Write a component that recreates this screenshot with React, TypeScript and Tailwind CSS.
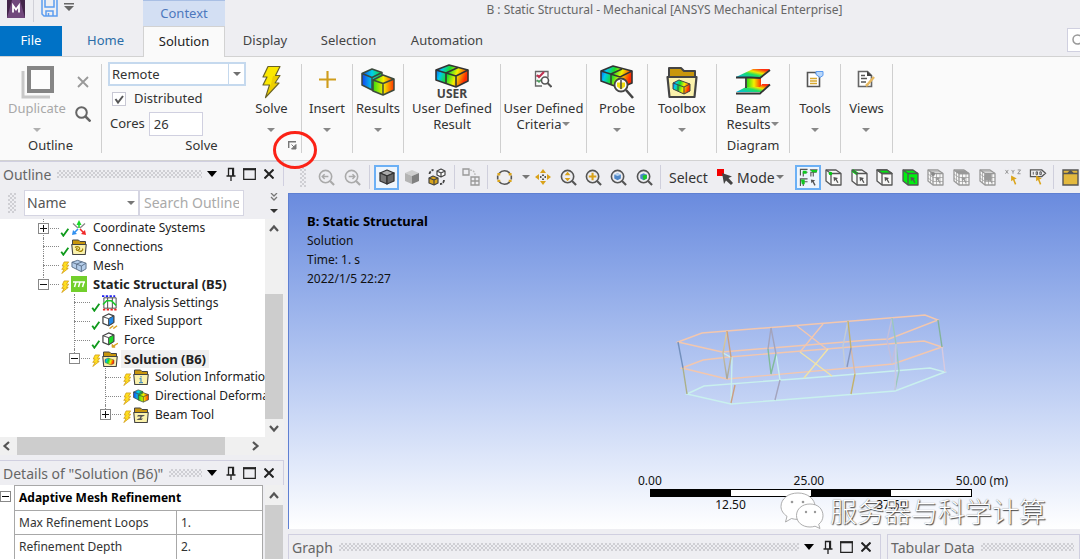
import React, { useState } from 'react';
import clsx from 'clsx';

type Status = 'ok' | 'pending';

interface TreeItem {
  label: string;
  depth: number;
  status: Status;
  icon: React.ReactNode;
  toggle?: '+' | '-';
  bold?: boolean;
  last?: boolean;
}

/* ---------- small shared glyphs ---------- */

const Caret: React.FC<{ className?: string }> = ({ className }) => (
  <svg viewBox="0 0 8 4" className={clsx('h-1 w-2 shrink-0', className)} fill="currentColor">
    <path d="M0 0h8L4 4z" />
  </svg>
);

const Chevron: React.FC<{ className?: string }> = ({ className }) => (
  <svg viewBox="0 0 10 10" className={clsx('h-[10px] w-[10px] shrink-0', className)} fill="none" stroke="#555" strokeWidth="2.2">
    <path d="M1 7l4-4.5L9 7" />
  </svg>
);

const Dots: React.FC<{ className?: string }> = ({ className }) => (
  <div
    className={clsx(
      'bg-[linear-gradient(#c2c2c8,#c2c2c8),linear-gradient(#c2c2c8,#c2c2c8)] bg-[length:4px_4px] bg-[position:0_0,2px_2px]',
      '[mask-image:conic-gradient(#000_25%,transparent_0_50%,#000_0_75%,transparent_0)] [mask-size:4px_4px] opacity-70',
      className
    )}
  />
);

const Bolt: React.FC<{ className?: string }> = ({ className }) => (
  <svg viewBox="0 0 22 34" className={className}>
    <path d="M8 1.500h12l-4.500 9h4.500l-5 7.500h4L5.500 32.500l4-12.500H3l4-8H3z" fill="#fbe800" stroke="#6a6226" strokeWidth="1.200" strokeLinejoin="round" />
    <path d="M13 11h6l-5 7.500h4L7 30l4-11z" fill="#d9a800" opacity=".4" />
  </svg>
);

const ContourDefs = () => (
  <svg className="absolute h-0 w-0" aria-hidden="true">
    <defs>
      <linearGradient id="hot" x1="0" x2="1" y1="0" y2="0.25">
        <stop offset="0" stopColor="#1238e8" />
        <stop offset=".22" stopColor="#00c8f0" />
        <stop offset=".45" stopColor="#18dc28" />
        <stop offset=".7" stopColor="#f2f000" />
        <stop offset="1" stopColor="#ff2a00" />
      </linearGradient>
      <linearGradient id="cool" x1="0" x2="1">
        <stop offset="0" stopColor="#1440f0" />
        <stop offset=".5" stopColor="#00d0e8" />
        <stop offset="1" stopColor="#20d820" />
      </linearGradient>
      <linearGradient id="warm" x1="0" x2="1">
        <stop offset="0" stopColor="#30dc10" />
        <stop offset=".5" stopColor="#f4f000" />
        <stop offset="1" stopColor="#ff3000" />
      </linearGradient>
      <linearGradient id="beamTop" x1="0" x2="1" y1="1" y2="0">
        <stop offset="0" stopColor="#00b8f0" />
        <stop offset=".4" stopColor="#20e060" />
        <stop offset=".6" stopColor="#f0e800" />
        <stop offset=".85" stopColor="#ff3010" />
      </linearGradient>
      <linearGradient id="canvasLine" x1="0" x2="0" y1="0" y2="1">
        <stop offset="0" stopColor="#e6cf9a" />
        <stop offset="1" stopColor="#a6a79c" />
      </linearGradient>
    </defs>
  </svg>
);

const Blocks: React.FC<{ className?: string }> = ({ className }) => (
  <svg viewBox="0 0 34 28" className={className} stroke="#3c4a3c" strokeWidth="1.5" strokeLinejoin="round">
    <path d="M1 5.500L11 1l10 3.500V18l-9 4.500L1 17z" fill="url(#cool)" />
    <path d="M1 5.500l10 4 10-5M11 9.500v12.500" fill="none" />
    <path d="M12 12l10-5 11 4v11l-11 5-10-4z" fill="url(#warm)" />
    <path d="M12 12l10 3.500 11-4.500M22 15.500v11.500" fill="none" />
  </svg>
);

const LongBox: React.FC<{ className?: string }> = ({ className }) => (
  <svg viewBox="0 0 34 24" className={className} stroke="#333" strokeWidth="1.6" strokeLinejoin="round">
    <path d="M1 6l13-5 19 5v11l-12 6L1 16z" fill="url(#hot)" />
    <path d="M1 6l20 6 12-6M21 12v11M11 9v10M11 9l12-5.500" fill="none" />
  </svg>
);

const Folder: React.FC<{ className?: string; children?: React.ReactNode }> = ({ className, children }) => (
  <svg viewBox="0 0 32 32" className={className} strokeLinejoin="round">
    <path d="M3 12V2h12l3 3h11v7z" fill="#c8960c" stroke="#444" strokeWidth="2" />
    <path d="M1.500 11h29l-2 20h-25z" fill="#fbf2ac" stroke="#444" strokeWidth="2.200" />
    {children}
  </svg>
);

/* ---------- ribbon icons ---------- */

const DuplicateIcon = () => (
  <svg viewBox="0 0 34 34" className="h-[34px] w-[34px]" fill="none">
    <path d="M3 6v26h27" stroke="#c8c8c8" strokeWidth="3" />
    <rect x="9" y="3" width="23" height="23" fill="#fdfdfd" stroke="#858585" strokeWidth="4" />
  </svg>
);

const CriteriaIcon = () => (
  <svg viewBox="0 0 18 18" className="h-[18px] w-[18px]" fill="none" stroke="#666">
    <path d="M1 1.500h13v6M1.500 1v15H8" strokeWidth="1.300" />
    <path d="M1 6h6M1 11h5" />
    <path d="M3 5l2 2 5-5" stroke="#c03050" strokeWidth="2" />
    <path d="M3 10l2 2 3-3" stroke="#4aa05a" strokeWidth="1.500" />
    <circle cx="11" cy="10.500" r="3.500" fill="#fff" stroke="#555" strokeWidth="1.600" />
    <path d="M13.500 13l4 4" stroke="#555" strokeWidth="2" />
  </svg>
);

const ProbeIcon = () => (
  <svg viewBox="0 0 34 34" className="h-[34px] w-[34px]">
    <path d="M1 6l12-5 19 5v12l-12 5-19-7z" fill="url(#hot)" stroke="#333" strokeWidth="1.600" strokeLinejoin="round" />
    <path d="M1 6l19 6 12-6M11 9v10M11 9l11-5" fill="none" stroke="#333" strokeWidth="1.400" />
    <circle cx="21" cy="20" r="6.500" fill="#fafafa" stroke="#444" strokeWidth="1.800" />
    <path d="M17 17.500h8v4l-4 3-4-3z" fill="#f0dc10" />
    <path d="M21 15v9" stroke="#444" strokeWidth="1.500" />
    <path d="M26 25l7 8" stroke="#444" strokeWidth="2.500" />
  </svg>
);

const BeamIcon = () => (
  <svg viewBox="0 0 36 28" className="h-7 w-9">
    <path d="M12 10h14v12H12z" fill="url(#warm)" />
    <path d="M1 9L18 1h17l-9 8z" fill="url(#beamTop)" />
    <path d="M1 24l10-5h14l2-3h8l-9 8z" fill="url(#beamTop)" />
    <path d="M1 9.500h14l10 .5L35 2M1 25.500h24l10-9M11 10v10" fill="none" stroke="#333" strokeWidth="1.800" />
  </svg>
);

const ToolsIcon = () => (
  <svg viewBox="0 0 18 18" className="h-[18px] w-[18px]" fill="none">
    <path d="M1.500 2.500h8l4 4v10h-12z" fill="#fff" stroke="#555" strokeWidth="1.600" />
    <path d="M4 8.500h7M4 11h7M4 13.500h7" stroke="#d7a830" strokeWidth="1.300" />
    <path d="M10 1.500h7v4l-3 2-4-3z" fill="#b9d7fa" stroke="#5a9af0" />
  </svg>
);

const ViewsIcon = () => (
  <svg viewBox="0 0 18 18" className="h-[18px] w-[18px]" fill="none">
    <path d="M1.500 1.500h9l4 4v11h-13z" fill="#fff" stroke="#666" strokeWidth="1.600" />
    <path d="M10 1v5h5z" fill="#444" />
    <path d="M4 5.500h4M4 8.500h6M4 12h5" stroke="#555" strokeWidth="1.300" />
    <path d="M17 7l-6 7-2 2" stroke="#e6b860" strokeWidth="2.500" />
  </svg>
);

/* ---------- ribbon ---------- */

const RibbonButton: React.FC<{ icon: React.ReactNode; lines: string[]; disabled?: boolean; inlineCaret?: boolean; caret?: boolean }> = ({
  icon,
  lines,
  disabled,
  inlineCaret,
  caret = true,
}) => (
  <button disabled={disabled} className={clsx('flex flex-col items-center whitespace-nowrap leading-4', disabled ? 'text-[#a8a8a8]' : 'text-[#333]')}>
    <span className="flex h-9 items-center justify-center">{icon}</span>
    <span>{lines[0]}</span>
    {lines[1] && (
      <span className="flex items-center gap-px">
        {lines[1]}
        {inlineCaret && <Caret className="text-[#888]" />}
      </span>
    )}
    {!lines[1] && caret && <Caret className={clsx('mt-3', disabled ? 'text-[#b0b0b0]' : 'text-[#888]')} />}
  </button>
);

const RibbonGroup: React.FC<{ width: string; caption?: string; children: React.ReactNode }> = ({ width, caption, children }) => (
  <div className={clsx('flex shrink-0 flex-col items-center justify-between border-r border-[#cfcfcf]', width)}>
    {children}
    {caption && <div className="leading-4">{caption}</div>}
  </div>
);

const Ribbon = () => (
  <div className="flex border-y border-[#d2d2d2] bg-[#fafafa] text-[13px] text-[#333]">
    <div className="my-[7px] flex h-[89px]">
      <RibbonGroup width="w-[102px]" caption="Outline">
        <div className="flex w-full pl-2">
          <RibbonButton icon={<DuplicateIcon />} lines={['Duplicate']} disabled />
          <div className="flex flex-1 flex-col items-center gap-[18px] pt-3">
            <button aria-label="Delete">
              <svg viewBox="0 0 12 12" className="h-3 w-3" stroke="#999" strokeWidth="1.800"><path d="M1 1l10 10M11 1L1 11" /></svg>
            </button>
            <button aria-label="Find">
              <svg viewBox="0 0 16 16" className="h-4 w-4" fill="none" stroke="#666" strokeWidth="2"><circle cx="6.500" cy="6.500" r="5.300" /><path d="M10.500 10.500l5 5" strokeWidth="2.500" /></svg>
            </button>
          </div>
        </div>
      </RibbonGroup>

      <RibbonGroup width="w-[200px]">
        <div className="flex w-full">
          <div className="-mt-0.5 flex flex-1 flex-col pl-1.5">
            <div className="relative h-6">
              <select aria-label="Solve target" className="h-6 w-full appearance-none border-2 border-[#c5d9ee] bg-white pl-0.5 text-[13px] leading-4">
                <option>Remote</option>
              </select>
              <span className="pointer-events-none absolute inset-y-0.5 right-0.5 flex w-4 items-center justify-center border-l border-[#c5d9ee] text-[#707070]"><Caret /></span>
            </div>
            <label className="mt-1 flex h-[18px] items-center gap-2 pl-1">
              <span className="relative flex h-3.5 w-3.5">
                <input type="checkbox" defaultChecked className="peer h-3.5 w-3.5 appearance-none border border-[#c8c8d4] bg-white" />
                <svg viewBox="0 0 14 14" className="pointer-events-none absolute inset-0 hidden peer-checked:block" fill="none" stroke="#555" strokeWidth="2"><path d="M3.500 7l2.500 3.500L11 4" /></svg>
              </span>
              Distributed
            </label>
            <label className="mt-1 flex items-center gap-1 pl-0.5">
              Cores
              <input type="text" defaultValue="26" className="h-6 w-[54px] border border-[#d0d0e0] bg-white pl-1" />
            </label>
          </div>
          <div className="flex w-[55px] justify-center pr-1">
            <RibbonButton icon={<Bolt className="h-[34px] w-[22px]" />} lines={['Solve']} />
          </div>
        </div>
        <div className="relative flex w-full items-center justify-center leading-4">
          Solve
          <button aria-label="Solve options" className="absolute right-0 top-0 p-1">
            <svg viewBox="0 0 9 9" className="h-[9px] w-[9px]" fill="none" stroke="#777"><path d="M.7 7V.7H8" strokeWidth="1.400" /><path d="M3.500 3.500L7 7M8 3.500V8H3.500z" fill="#777" /></svg>
          </button>
          <svg viewBox="0 0 44 38" className="pointer-events-none absolute -right-4 -top-1.5 z-10 h-[38px] w-11" fill="none" stroke="#fb2216" strokeWidth="3"><ellipse cx="22" cy="19" rx="20.500" ry="17.500" /></svg>
        </div>
      </RibbonGroup>

      <RibbonGroup width="w-[51px]">
        <RibbonButton icon={<svg viewBox="0 0 16 16" className="mb-1.5 h-[17px] w-[17px]" stroke="#cf9d1c" strokeWidth="2"><path d="M8 0v16M0 8h16" /></svg>} lines={['Insert']} />
      </RibbonGroup>
      <RibbonGroup width="w-[51px]">
        <RibbonButton icon={<Blocks className="h-7 w-[34px]" />} lines={['Results']} />
      </RibbonGroup>
      <RibbonGroup width="w-[97px]">
        <RibbonButton
          icon={
            <span className="flex flex-col items-center">
              <LongBox className="h-6 w-[34px]" />
              <span className="text-[12px] font-bold leading-3 text-[#444]">USER</span>
            </span>
          }
          lines={['User Defined', 'Result']}
        />
      </RibbonGroup>
      <RibbonGroup width="w-[86px]">
        <RibbonButton icon={<span className="pb-1.5"><CriteriaIcon /></span>} lines={['User Defined', 'Criteria']} inlineCaret />
      </RibbonGroup>
      <RibbonGroup width="w-[61px]">
        <RibbonButton icon={<ProbeIcon />} lines={['Probe']} />
      </RibbonGroup>
      <RibbonGroup width="w-[69px]">
        <RibbonButton
          icon={
            <Folder className="h-8 w-8">
              <path d="M7 17l6-3 11 4v7l-6 3-11-5z" fill="url(#hot)" stroke="#444" />
              <path d="M7 17l11 4 6-3M18 21v7M12 19v6" fill="none" stroke="#444" />
            </Folder>
          }
          lines={['Toolbox']}
        />
      </RibbonGroup>
      <RibbonGroup width="w-[73px]" caption="Diagram">
        <RibbonButton icon={<BeamIcon />} lines={['Beam', 'Results']} inlineCaret />
      </RibbonGroup>
      <RibbonGroup width="w-[51px]">
        <RibbonButton icon={<span className="pb-1.5"><ToolsIcon /></span>} lines={['Tools']} />
      </RibbonGroup>
      <RibbonGroup width="w-[52px]">
        <RibbonButton icon={<span className="pb-1.5"><ViewsIcon /></span>} lines={['Views']} />
      </RibbonGroup>
    </div>
  </div>
);

/* ---------- docked panel chrome ---------- */

const PanelHeader: React.FC<{ title: string; controls?: boolean }> = ({ title, controls = true }) => (
  <div className="flex h-[25px] shrink-0 items-center border-r border-t border-[#d0cfe0] bg-[#eeeef2] pl-[3px] pr-[5px]">
    <h2 className="mr-1.5 whitespace-nowrap text-[14px] text-[#666]">{title}</h2>
    <Dots className="h-2 flex-1" />
    {controls && (
      <div className="flex text-[#222]">
        <button aria-label="Menu" className="flex w-[19px] items-center justify-center">
          <svg viewBox="0 0 10 6" className="h-1.5 w-[10px]"><path d="M0 0h10L5 6z" /></svg>
        </button>
        <button aria-label="Pin" className="flex w-[19px] items-center justify-center">
          <svg viewBox="0 0 10 14" className="h-3.5 w-[10px]" fill="none" stroke="currentColor"><path d="M2.500 9V1.500h5V9M.5 9h9M5 9v5" strokeWidth="1.300" /><path d="M7 1v8" strokeWidth="2" /></svg>
        </button>
        <button aria-label="Maximize" className="flex w-[19px] items-center justify-center">
          <svg viewBox="0 0 13 12" className="h-3 w-[13px]" fill="none" stroke="currentColor"><path d="M.7 1v10.300h11.600V1" strokeWidth="1.200" /><path d="M0 1.200h13" strokeWidth="2.200" /></svg>
        </button>
        <button aria-label="Close" className="flex w-[19px] items-center justify-center">
          <svg viewBox="0 0 10 10" className="h-[10px] w-[10px]" stroke="currentColor" strokeWidth="2"><path d="M.5.5l9 9M9.500.5l-9 9" /></svg>
        </button>
      </div>
    )}
  </div>
);

/* ---------- outline tree ---------- */

const StatusMark: React.FC<{ status: Status }> = ({ status }) =>
  status === 'ok' ? (
    <svg viewBox="0 0 12 12" className="mt-2 h-[10px] w-3 shrink-0" fill="none" stroke="#0f9a1c" strokeWidth="2.200"><path d="M1.500 7l2.500 3.500L10 2" /></svg>
  ) : (
    <svg viewBox="0 0 12 14" className="mt-1 h-[13px] w-3 shrink-0" strokeLinejoin="round"><path d="M5 1h5L7.500 4.500H10L7.500 8H9.500L2.500 13.500 5 9H2.500L5 5.500H3z" fill="#ffdf20" stroke="#d09a10" strokeWidth=".8" /></svg>
  );

const SmallCube: React.FC<{ face: string; arrow?: boolean }> = ({ face, arrow }) => (
  <svg viewBox="0 0 17 17" className="h-4 w-4" strokeLinejoin="round">
    <path d="M1 4l6-3 5.500 2v7L7 13.500 1 11z" fill="#fff" stroke="#444" strokeWidth="1.300" />
    <path d="M7 6l5.500-3v7L7 13.500z" fill={face} stroke="#444" />
    <path d="M1 4l6 2" stroke="#444" />
    {arrow ? <path d="M17 12l-6 3.500M11 13v3h3" fill="none" stroke="#d8a020" strokeWidth="1.500" /> : <path d="M8 16.500l4-3M12 16.500l4-3" stroke="#d8a020" strokeWidth="1.500" />}
  </svg>
);

const SmallFolder: React.FC<{ children: React.ReactNode }> = ({ children }) => <Folder className="h-4 w-4">{children}</Folder>;

const TREE: TreeItem[] = [
  {
    label: 'Coordinate Systems', depth: 0, status: 'ok', toggle: '+',
    icon: (
      <svg viewBox="0 0 16 16" className="h-4 w-4" fill="none" strokeWidth="1.600">
        <path d="M7 8L2 3.500M9 8l5-4.500" stroke="#888" strokeWidth="1.300" />
        <path d="M8 8V4" stroke="#18d828" /><path d="M5.500 5L8 0l2.500 5z" fill="#18d828" />
        <path d="M7 9l-4 4" stroke="#3090f0" /><path d="M1 15l1-5 4 4z" fill="#3090f0" />
        <path d="M9 9l4 4" stroke="#f02828" /><path d="M15 15l-1-5-4 4z" fill="#f02828" />
      </svg>
    ),
  },
  { label: 'Connections', depth: 0, status: 'ok', icon: <SmallFolder><path d="M8 17c5-4 12 0 8 4s-8 0-3-3M15 24c5 2 10-1 8-5" fill="none" stroke="#a08000" strokeWidth="2.500" /></SmallFolder> },
  {
    label: 'Mesh', depth: 0, status: 'pending',
    icon: (
      <svg viewBox="0 0 17 14" className="h-3.5 w-4" fill="#b4cdea" stroke="#5b6f88" strokeLinejoin="round"><path d="M1 3l6-2 9 3v6l-5 3-10-5z" /><path d="M1 3l10 4 5-3M11 7v6M6 5v5M6 5l6-2.500" fill="none" /></svg>
    ),
  },
  {
    label: 'Static Structural (B5)', depth: 0, status: 'pending', toggle: '-', bold: true, last: true,
    icon: <svg viewBox="0 0 16 16" className="h-4 w-4"><path d="M0 0h16v16H0z" fill="#72cf2c" /><path d="M2 6h12M5 6l-1.500 5M9 6l-1.500 5M13 6l-1.500 5" stroke="#fff" strokeWidth="1.500" /></svg>,
  },
  {
    label: 'Analysis Settings', depth: 1, status: 'ok',
    icon: (
      <svg viewBox="0 0 17 17" className="h-4 w-4" fill="none">
        <path d="M2 3v11M6 3v11M11 3v11M15 3v11M2 3h13M2 14h13" stroke="#444" />
        <path d="M0 1.200h14" stroke="#2020f0" strokeWidth="2" strokeDasharray="2.500 1.500" />
        <path d="M1 10l4-4h5l5 5" stroke="#18c828" strokeWidth="1.600" />
        <path d="M1 15.500h16" stroke="#f02020" strokeWidth="2" strokeDasharray="2.500 1.500" />
      </svg>
    ),
  },
  { label: 'Fixed Support', depth: 1, status: 'ok', icon: <SmallCube face="#2288e8" /> },
  { label: 'Force', depth: 1, status: 'ok', icon: <SmallCube face="#18dc28" arrow /> },
  {
    label: 'Solution (B6)', depth: 1, status: 'pending', toggle: '-', bold: true, last: true,
    icon: <SmallFolder><path d="M6 17l6-3 12 4v7l-6 3-12-5z" fill="url(#hot)" stroke="#555" /></SmallFolder>,
  },
  { label: 'Solution Information', depth: 2, status: 'pending', icon: <SmallFolder><path d="M16 14v3M13 19h3v8M12 27h8" stroke="#4a90c0" strokeWidth="2.500" fill="none" /></SmallFolder> },
  { label: 'Directional Deformation', depth: 2, status: 'pending', icon: <Blocks className="h-3.5 w-4" /> },
  { label: 'Beam Tool', depth: 2, status: 'pending', toggle: '+', last: true, icon: <SmallFolder><path d="M10 16h14l-4 3h-2l-2 4h4l-3 3H7l4-3h2l2-4h-7z" fill="#555" /></SmallFolder> },
];

const TreeRow: React.FC<{ item: TreeItem; selected: boolean; onSelect: () => void }> = ({ item, selected, onSelect }) => (
  <li className="flex min-h-0 items-center">
    {Array.from({ length: item.depth }, (_, i) => (
      <span key={i} className="w-[31px] shrink-0" />
    ))}
    <span className="relative flex w-[31px] shrink-0 items-center self-stretch">
      <span className={clsx('absolute left-[15px] top-0 border-l border-dotted border-[#888]', item.last ? 'h-1/2' : 'h-full')} />
      <span className="absolute left-[15px] right-0 border-t border-dotted border-[#888]" />
      {item.toggle && (
        <button aria-label="Toggle" className="relative ml-[10px] flex h-[11px] w-[11px] items-center justify-center border border-[#888] bg-white">
          <svg viewBox="0 0 7 7" className="h-[7px] w-[7px] shrink-0" stroke="#111"><path d={item.toggle === '+' ? 'M0 3.500h7M3.500 0v7' : 'M0 3.500h7'} /></svg>
        </button>
      )}
    </span>
    <StatusMark status={item.status} />
    <span className="flex w-4 shrink-0 items-center">{item.icon}</span>
    <button
      onClick={onSelect}
      className={clsx('ml-[3px] h-[18px] whitespace-nowrap px-[3px] leading-[18px] text-[#222]', item.bold && 'text-[13px] font-bold', selected && 'bg-[#f0f0f0]')}
    >
      {item.label}
    </button>
  </li>
);

const OutlinePanel = () => {
  const [selected, setSelected] = useState('Solution (B6)');

  return (
    <section>
      <PanelHeader title="Outline" />
      <div className="flex h-[33px] items-center pl-2 text-[14px] text-[#555]">
        <Dots className="mr-2 h-5 w-2" />
        <div className="relative h-[26px] w-[115px]">
          <select aria-label="Filter by" className="h-full w-full appearance-none border border-[#d5d5e2] bg-white pl-0.5">
            <option>Name</option>
          </select>
          <Caret className="pointer-events-none absolute right-1 top-[11px] text-[#777]" />
        </div>
        <input aria-label="Search Outline" placeholder="Search Outline" className="h-[26px] w-[105px] border border-[#d5d5e2] bg-white px-1 placeholder:text-[#aaa]" />
        <div className="flex flex-1 flex-col items-center gap-2 pl-5">
          <svg viewBox="0 0 8 8" className="h-2 w-2" fill="none" stroke="#777" strokeWidth="1.300"><path d="M1 0l3 3 3-3M1 4l3 3 3-3" /></svg>
          <Caret className="text-[#333]" />
        </div>
      </div>
      <div className="flex bg-[#f0f0f0] pr-px">
        <ul className="grid h-[218px] flex-1 auto-rows-fr overflow-hidden bg-white pb-[13px] pl-7 text-[12px]">
          {TREE.map((item) => (
            <TreeRow key={item.label} item={item} selected={selected === item.label} onSelect={() => setSelected(item.label)} />
          ))}
        </ul>
        <div className="flex w-[18px] flex-col items-center justify-between py-1">
          <Chevron className="mt-px" />
          <div className="mb-1 mt-[60px] w-full flex-1 bg-[#cdcdcd]" />
          <Chevron className="rotate-180" />
        </div>
      </div>
      <div className="flex h-[18px] items-center bg-[#f0f0f0] pl-0.5 pr-6">
        <Chevron className="-rotate-90" />
        <div className="ml-[5px] mr-[25px] h-full flex-1 bg-[#cdcdcd]" />
        <Chevron className="rotate-90" />
      </div>
    </section>
  );
};

const DetailsPanel = () => (
  <section className="mt-[5px] flex min-h-0 flex-1 flex-col">
    <PanelHeader title={'Details of "Solution (B6)"'} />
    <div className="flex min-h-0 flex-1 overflow-hidden pr-px">
      <div className="w-3.5 shrink-0 bg-white pt-1.5">
        <button aria-label="Collapse" className="flex h-[11px] w-[11px] items-center justify-center border border-[#888] bg-white">
          <span className="h-px w-[7px] bg-black" />
        </button>
      </div>
      <table className="h-[74px] flex-1 table-fixed border-collapse bg-white text-left text-[12px] text-[#333]">
        <tbody>
          <tr className="h-[25px]">
            <th colSpan={2} className="border border-[#a8a8a8] pl-1 text-black">Adaptive Mesh Refinement</th>
          </tr>
          <tr className="h-[24px]">
            <td className="w-[162px] border border-[#a8a8a8] pl-1">Max Refinement Loops</td>
            <td className="border border-[#a8a8a8] pl-1">1.</td>
          </tr>
          <tr className="h-[25px]">
            <td className="border border-[#a8a8a8] pl-1">Refinement Depth</td>
            <td className="border border-[#a8a8a8] pl-1">2.</td>
          </tr>
        </tbody>
      </table>
      <div className="ml-0.5 flex w-[18px] flex-col items-center bg-[#f0f0f0] pt-1.5">
        <Chevron />
        <div className="mt-1 w-full flex-1 bg-[#cdcdcd]" />
      </div>
    </div>
  </section>
);

/* ---------- graphics toolbar ---------- */

const Lens: React.FC<{ color?: string; children?: React.ReactNode }> = ({ color = '#555', children }) => (
  <svg viewBox="0 0 18 18" className="h-[17px] w-[17px]" fill="none">
    <circle cx="8" cy="8" r="6.500" stroke={color} strokeWidth="1.700" />
    <path d="M12.500 12.500l4.500 4.500" stroke={color} strokeWidth="2.200" />
    {children}
  </svg>
);

const Box3D: React.FC<{ dark?: boolean }> = ({ dark }) => (
  <svg viewBox="0 0 16 16" className="h-4 w-4" strokeLinejoin="round" stroke={dark ? '#333' : 'none'} strokeWidth="1.300">
    <path d="M1 4l7-3 7 3-7 3z" fill={dark ? '#aaa' : '#cfcfcf'} />
    <path d="M1 4l7 3v8l-7-3z" fill={dark ? '#777' : '#b4b4b4'} />
    <path d="M8 7l7-3v8l-7 3z" fill={dark ? '#666' : '#808080'} />
  </svg>
);

const PickCube: React.FC<{ mode: 'vertex' | 'edge' | 'face' | 'body' | 'node' | 'elemFace' | 'element' }> = ({ mode }) => {
  const muted = mode === 'node' || mode === 'elemFace' || mode === 'element';
  const stroke = muted ? '#999' : '#555';
  return (
    <svg viewBox="0 0 17 17" className="h-[17px] w-[17px]" fill="none" stroke={stroke} strokeWidth="1.300" strokeLinejoin="round">
      <path d="M1 1h10l5 3.500V16H6l-5-4z" fill={mode === 'body' ? '#00f010' : '#f8f8f8'} />
      {mode === 'face' && <path d="M1 1h10l5 3.500H6z" fill="#00e810" />}
      {mode === 'edge' && <path d="M1.500 1.500l5 3.500" stroke="#00d010" strokeWidth="3" />}
      <path d="M1 1l5 3.500h10M6 4.500V16" />
      {mode === 'vertex' && <circle cx="5.500" cy="4.500" r="1.800" fill="#00c810" stroke="none" />}
      {muted && <path d="M6 8.500h10M6 12.500h10M9.500 4.500V16M13 4.500V16M3.500 3v11M1 5l5 3.500M1 9l5 3.500M3.500 2.700h10" strokeWidth=".7" />}
      {mode === 'node' && <circle cx="6" cy="5" r="2" fill="#888" stroke="none" />}
      {mode === 'elemFace' && <path d="M3 2h9l3 2.500H6z" fill="#999" />}
      {mode === 'element' && <path d="M6 6l6-1v6H6z" fill="#999" />}
      <path d="M8.500 8l4.500 1-1.300 1.200 1.800 3.300-1.200.6-1.800-3.300L9 12.500z" fill={stroke} stroke="none" />
    </svg>
  );
};

const Sep = () => <span className="h-6 w-px shrink-0 bg-[#cfcfdc]" />;

const ToolButton: React.FC<{ label: string; active?: boolean; children: React.ReactNode }> = ({ label, active, children }) => (
  <button aria-label={label} className={clsx('flex h-[25px] min-w-0 items-center justify-center', active && 'border-2 border-[#6cb0f5] bg-[#eef5fc]')}>
    {children}
  </button>
);

const GraphicsToolbar = () => (
  <div className="flex h-8 shrink-0 items-center overflow-hidden pl-3 text-[14px] text-[#333]">
    <Dots className="h-5 w-1.5" />
    <div className="ml-2 mr-1 grid w-[51px] shrink-0 grid-cols-2">
      <ToolButton label="Zoom previous"><Lens color="#aaa"><path d="M4.500 8H11M7 5.500L4.500 8 7 10.500" stroke="#aaa" strokeWidth="1.500" /></Lens></ToolButton>
      <ToolButton label="Zoom next"><Lens color="#aaa"><path d="M5 8h6.500M9 5.500L11.500 8 9 10.500" stroke="#aaa" strokeWidth="1.500" /></Lens></ToolButton>
    </div>
    <Sep />
    <div className="ml-1 mr-1 grid w-[76px] shrink-0 grid-cols-3">
      <ToolButton label="Shaded with edges" active><Box3D dark /></ToolButton>
      <ToolButton label="Shaded"><Box3D /></ToolButton>
      <ToolButton label="Random colors">
        <svg viewBox="0 0 18 18" className="h-[18px] w-[18px]" strokeLinejoin="round" fill="none" stroke="#444" strokeWidth="1.200">
          <path d="M9 3l4-2 4 2v4l-4 2-4-2zM9 3l4 2 4-2M13 5v4" fill="#fff" />
          <path d="M1 10l4-2 5 2v5l-4 2-5-2z" fill="#d8a41c" /><path d="M1 10l5 2 4-2M6 12v5" />
          <path d="M1.500 6c0-2 2-4 4-4M16 12c0 2-1.500 4-4 4" strokeWidth="1.800" strokeDasharray="3 1" />
        </svg>
      </ToolButton>
    </div>
    <Sep />
    <div className="flex w-8 shrink-0 justify-center">
      <ToolButton label="Explode">
        <svg viewBox="0 0 18 18" className="h-[18px] w-[18px]" fill="none" stroke="#999" strokeWidth="1.300"><path d="M1 1h6v6H1zM9 9h8v8H9zM13 9v8M9 13h8" /><path d="M8 2c3 0 5 2 5 5" stroke="#bbb" strokeDasharray="2 1" /></svg>
      </ToolButton>
    </div>
    <Sep />
    <div className="ml-2 flex w-[34px] shrink-0 items-center justify-between">
      <ToolButton label="Rotate">
        <svg viewBox="0 0 18 18" className="h-[17px] w-[17px]" fill="none" stroke="#555" strokeWidth="1.700"><path d="M3.500 4.500a7 7 0 0 1 11 0M14.500 13.500a7 7 0 0 1-11 0M1.800 7v4M16.200 7v4" /><path d="M1.500 5.500h3M13.500 5.500h3M1.500 12.500h3M13.500 12.500h3" stroke="#dba51c" strokeWidth="2.500" /></svg>
      </ToolButton>
      <Caret className="text-[#777]" />
    </div>
    <div className="mr-[3px] grid w-[127px] shrink-0 grid-cols-5">
      <ToolButton label="Pan">
        <svg viewBox="0 0 16 16" className="h-4 w-4" fill="#d9a21a"><path d="M8 0l3 4H5zM8 16l3-4H5zM0 8l4-3v6zM16 8l-4-3v6z" /><path d="M7 5.500h2v1.500H7zM7 9.500h2V11H7zM5 7h1.500v2H5zM9.500 7H11v2H9.500z" fill="#555" /></svg>
      </ToolButton>
      <ToolButton label="Zoom"><Lens><path d="M8 3l3 3.500H5zM8 13l3-3.500H5z" fill="#d9a21a" /></Lens></ToolButton>
      <ToolButton label="Box zoom"><Lens><path d="M8 4v8M4 8h8" stroke="#d9a21a" strokeWidth="2.200" /></Lens></ToolButton>
      <ToolButton label="Zoom to fit"><Lens><path d="M4.500 6L8 4.500 11.500 6v4L8 12l-3.500-2z" fill="#4f87c8" /><path d="M4.500 6L8 7.500 11.500 6 8 4.500z" fill="#b8d4f0" /></Lens></ToolButton>
      <ToolButton label="Zoom to selection"><Lens><path d="M4.500 6L8 4.500 11.500 6v4L8 12l-3.500-2z" fill="#4f87c8" /><path d="M7 7l4.500-1v4L8 12z" fill="#18c828" /></Lens></ToolButton>
    </div>
    <Sep />
    <span className="ml-2 w-[48px] shrink-0">Select</span>
    <button className="flex w-[78px] shrink-0 items-center">
      <svg viewBox="0 0 16 16" className="mr-1 h-4 w-4 shrink-0"><path d="M0 0h7v7H0z" fill="#f40000" /><path d="M5 4l10 3.500-3.500 1.500L16 14l-2 2-5-4.500L7 15z" fill="#444" /></svg>
      Mode
      <Caret className="ml-px text-[#777]" />
    </button>
    <div className="grid w-[26px] shrink-0">
      <ToolButton label="Smart select" active>
        <svg viewBox="0 0 20 20" className="h-[19px] w-[19px]" fill="none" stroke="#555" strokeWidth="1.200">
          <path d="M1.500 8V1.500H9M4.500 9V4.500H9M11.500 2h8M12.500 9V4.500h6M15 9V5M1.500 19v-7.500H9M4.500 19v-4.500H9" />
          <path d="M4 3h4v3H4zM12 2h7v2.500h-5zM2 12h4v5H3z" fill="#10c820" stroke="none" />
          <path d="M12.500 12l4.500 1-1.500 1.200 2 3.800-1.300.6-2-3.800-1.200 1.200z" fill="#555" stroke="none" />
        </svg>
      </ToolButton>
    </div>
    <div className="mr-0.5 grid w-[230px] shrink-0 grid-cols-9">
      <ToolButton label="Vertex"><PickCube mode="vertex" /></ToolButton>
      <ToolButton label="Edge"><PickCube mode="edge" /></ToolButton>
      <ToolButton label="Face"><PickCube mode="face" /></ToolButton>
      <ToolButton label="Body"><PickCube mode="body" /></ToolButton>
      <ToolButton label="Node"><PickCube mode="node" /></ToolButton>
      <ToolButton label="Element face"><PickCube mode="elemFace" /></ToolButton>
      <ToolButton label="Element"><PickCube mode="element" /></ToolButton>
      <ToolButton label="Hit point">
        <svg viewBox="0 0 18 18" className="h-[17px] w-[18px]" fill="none" stroke="#888"><path d="M1 1l3 4M4 1L1 5M7.500 1L9 3l1.500-2M9 3v2M14 1h3l-3 4h3" strokeWidth=".9" /><path d="M7 7l6 3-2.500 1 2 5-1.500.7-2-5L7 13z" fill="#dba51c" stroke="none" /></svg>
      </ToolButton>
      <ToolButton label="Label">
        <svg viewBox="0 0 18 18" className="h-[17px] w-[18px]" fill="none" stroke="#555" strokeWidth="1.300"><path d="M1 1h12l4 3.500L13 8H1z" /><path d="M4 3v3M7 3h1.500v3H7zM11 3h1.500v3H11z" strokeWidth="1" /><path d="M7 7l6 3-2.500 1 2 5-1.500.7-2-5L7 13z" fill="#dba51c" stroke="none" /></svg>
      </ToolButton>
    </div>
    <Sep />
    <div className="ml-2 shrink-0">
      <ToolButton label="Clipboard">
        <svg viewBox="0 0 17 17" className="h-[17px] w-[17px]" stroke="#555" strokeWidth="1.400"><path d="M1 1h15v15H1z" fill="#e3b93e" /><path d="M1 4.500h15M6 4l2.500-2L11 4" fill="#555" /></svg>
      </ToolButton>
    </div>
  </div>
);

/* ---------- viewport ---------- */

const Wireframe = () => (
  <svg viewBox="0 0 300 120" className="absolute left-[371px] top-[106px] h-[120px] w-[300px]" fill="none" strokeWidth="1.400">
    <g stroke="#f3c7ae">
      <path d="M18 42L42 33l212-17 11-1 13 5-49 19-20 1L62 52z" />
      <path d="M22 68l21-8 26-3 195-16 18 6-49 17L67 79z" />
      <path d="M137 26l31 24M163 24L140 52" />
    </g>
    <g stroke="#c9f0ee">
      <path d="M27 94l17-8 104-8 122-10 15 4-50 19-164 13z" />
      <path d="M63 53l9 5-1 45M116 54l4 26" />
    </g>
    <path d="M140 52l32 24M168 49l-24 29" stroke="#f0e3a8" />
    <path d="M18 42l5 26" stroke="#7390bd" />
    <path d="M23 68l4 26" stroke="#abb089" />
    <path d="M67 31l-4 22 4 26 4-22" stroke="url(#canvasLine)" />
    <path d="M67 31l4 26M75 85l-4 18" stroke="#cba081" />
    <path d="M111 28l-3 21M111 28l5 26M120 80l-5 20" stroke="#a3a4bd" />
    <path d="M108 49l3 25 5-20" stroke="#81bb99" />
    <path d="M188 21l-5 25 2 21" stroke="#c5cdd5" />
    <path d="M188 21l3 27M195 74l-4 20" stroke="#c3b26c" />
    <path d="M191 48l4 26" stroke="#d8b9a5" />
    <path d="M191 48l-4 19" stroke="#8797bd" />
    <path d="M232 18l-5 22 5 23 4-19" stroke="#c3bfdc" />
    <path d="M232 18l4 26 3 27-4 19" stroke="#9bc8bd" />
    <path d="M236 44l-1 46" stroke="#c9c9e5" />
    <path d="M278 20l4 27" stroke="#83b39b" />
    <path d="M282 47l3 25" stroke="#d8cadf" />
  </svg>
);

const WeChat = () => (
  <svg viewBox="0 0 44 37" className="h-[37px] w-11 shrink-0" stroke="#999" strokeWidth=".8">
    <path d="M18 1C8 1 1 7 1 14.500c0 4 2.500 7.500 6 9.800L5.500 30l6-3.500c2 .6 4 .9 6.500.9 10 0 17-6 17-13S28 1 18 1z" fill="#fff" />
    <path d="M30 12c-8 0-13.500 5-13.500 11.500S22 35 30 35c2 0 3.500-.3 5-.8l5 2.300-1.300-4.200c2.600-2 4.300-5 4.300-8.500C43 17 38 12 30 12z" fill="#fff" />
    <g fill="#999" stroke="none"><circle cx="12" cy="10" r="1.300" /><circle cx="23" cy="10" r="1.300" /><circle cx="26" cy="20" r="1.200" /><circle cx="35" cy="20" r="1.200" /></g>
  </svg>
);

const ScaleBar = () => (
  <div className="absolute bottom-4 right-[72px] w-[370px] text-[12px] leading-4 text-[#111]">
    <div className="flex justify-between">
      <span className="w-6">0.00</span>
      <span>25.00</span>
      <span className="whitespace-nowrap">50.00 (m)</span>
    </div>
    <div className="ml-3 mr-9 grid h-2 grid-cols-4 border border-black bg-white">
      <span className="bg-black" />
      <span />
      <span className="bg-black" />
    </div>
    <div className="ml-3 mr-9 flex justify-around">
      <span>12.50</span>
      <span>37.50</span>
    </div>
  </div>
);

const Viewport = () => (
  <div className="relative min-h-0 flex-1 overflow-hidden border-l border-t border-[#5f80d2] bg-linear-to-b from-[#6a8bde] to-white">
    <div className="pl-[18px] pt-[18px] text-[12px] leading-[19px] text-[#111]">
      <p className="text-[13px] font-bold text-black">B: Static Structural</p>
      <p>Solution</p>
      <p>Time: 1. s</p>
      <p>2022/1/5 22:27</p>
    </div>
    <Wireframe />
    <ScaleBar />
    <div className="absolute bottom-0 right-[34px] flex items-center gap-1.5">
      <WeChat />
      <span className="whitespace-nowrap font-['Noto_Sans_CJK_SC',sans-serif] text-[27px] font-light leading-8 text-white [text-shadow:1px_1px_1px_#444,0_0_1px_#777]">
        服务器与科学计算
      </span>
    </div>
  </div>
);

/* ---------- title + tabs ---------- */

const TitleBar = () => (
  <div className="flex h-[26px] text-[13px]">
    <div className="flex w-[143px] items-start pl-[7px]">
      <svg viewBox="0 0 18 18" className="h-[18px] w-[18px]">
        <path d="M0 0h18v18H0z" fill="#43254a" />
        <path d="M0 18L5 0h8l5 18z" fill="#71487c" />
        <path d="M6 12.500V5.500l3 4 3-4v7" fill="none" stroke="#fff" strokeWidth="1.800" />
      </svg>
      <span className="ml-2 h-[22px] w-px bg-[#d0d0d8]" />
      <button aria-label="Save" className="ml-[7px]">
        <svg viewBox="0 0 17 17" className="h-[17px] w-[17px]" fill="none" stroke="#5c9df0" strokeWidth="1.500"><path d="M1 0v14l2 2h13V0M4 0v7h9V0M5 16v-5h7v5M7.500 16v-3" /></svg>
      </button>
      <svg viewBox="0 0 10 8" className="ml-[6px] mt-[3px] h-2 w-[10px]" fill="#666"><path d="M0 0h10v1.500H0zM0 3h10L5 8z" /></svg>
    </div>
    <div className="flex w-[82px] items-center justify-center border-t border-[#a9bfe4] bg-[#d3dff3] text-[#4d78bd]">Context</div>
    <h1 className="flex-1 truncate pl-6 text-center text-[12px] leading-5 text-[#666]">B : Static Structural - Mechanical [ANSYS Mechanical Enterprise]</h1>
  </div>
);

const TABS = [
  { label: 'Home', cls: 'ml-1.5 w-[75px]' },
  { label: 'Solution', cls: 'w-[82px]' },
  { label: 'Display', cls: 'w-[80px]' },
  { label: 'Selection', cls: 'w-[87px]' },
  { label: 'Automation', cls: 'w-[110px]' },
];

const TabBar = () => {
  const [active, setActive] = useState('Solution');

  return (
    <nav className="flex h-[30px] items-stretch text-[13px] text-[#444]">
      <button className="w-[62px] bg-[#0072c6] text-white">File</button>
      {TABS.map((tab) => (
        <button
          key={tab.label}
          onClick={() => setActive(tab.label)}
          className={clsx(
            tab.cls,
            active === tab.label && 'relative -mb-px border-x border-t border-[#d2d2d2] bg-[#fafafa] text-[#222]',
            tab.label === 'Home' && 'text-[#2b6da8]'
          )}
        >
          {tab.label}
        </button>
      ))}
      <label className="ml-auto mt-0.5 flex h-6 w-[13px] items-center overflow-hidden border border-r-0 border-[#d0d0e0] bg-white pl-1">
        <svg viewBox="0 0 14 14" className="h-3.5 w-3.5 shrink-0" fill="none" stroke="#999" strokeWidth="1.500"><circle cx="5.500" cy="6.500" r="4.500" /><path d="M9 10l4 4" /></svg>
        <input aria-label="Quick launch" className="w-0" />
      </label>
    </nav>
  );
};

export default function App() {
  return (
    <div className="flex h-screen flex-col overflow-hidden bg-[#eeeef2] font-['Noto_Sans',sans-serif]">
      <ContourDefs />
      <TitleBar />
      <TabBar />
      <Ribbon />
      <div className="flex min-h-0 flex-1">
        <aside className="mr-1 flex w-[284px] shrink-0 flex-col">
          <OutlinePanel />
          <DetailsPanel />
        </aside>
        <main className="flex min-w-0 flex-1 flex-col">
          <GraphicsToolbar />
          <Viewport />
          <div className="mt-[5px] flex shrink-0 gap-1.5">
            <div className="min-w-0 flex-1 border-l border-[#d0cfe0]">
              <PanelHeader title="Graph" />
            </div>
            <div className="w-[193px] border-l border-[#d0cfe0]">
              <PanelHeader title="Tabular Data" controls={false} />
            </div>
          </div>
        </main>
      </div>
    </div>
  );
}
